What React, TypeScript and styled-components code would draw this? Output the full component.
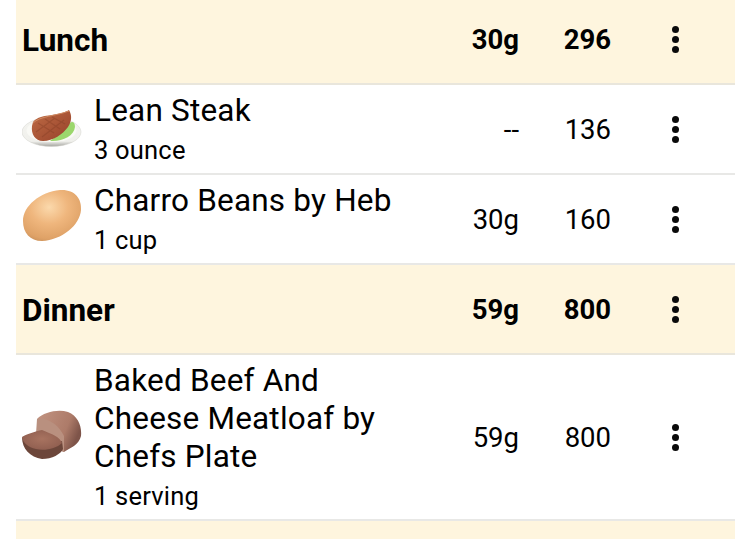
import React from "react";
import styled, { createGlobalStyle } from "styled-components";

const Global = createGlobalStyle`
  html, body { margin: 0; padding: 0; background: #fff; overflow: hidden; }
  body { font-family: Roboto, "Liberation Sans", sans-serif; color: #000; }
`;

const List = styled.div`
  margin: -5px 15px 0 16px;
  display: flex;
  flex-direction: column;
`;

const Row = styled.div<{ $header?: boolean }>`
  display: grid;
  grid-template-columns: 78px 1fr 90px 92px 124px;
  align-items: center;
  min-height: 88px;
  border-bottom: 2px solid ${(p) => (p.$header ? "#e9e6dc" : "#e8e8e6")};
  background: ${(p) => (p.$header ? "#fef5de" : "#fff")};
  font-weight: ${(p) => (p.$header ? 700 : 400)};
`;

const HeaderTitle = styled.div`
  grid-column: 1 / span 2;
  padding: 2px 0 0 6px;
  font-size: 31.5px;
  font-weight: 700;
`;

const IconCell = styled.div`
  padding-left: 6px;
  display: flex;
  align-items: center;
`;

const Info = styled.div`
  padding: 7px 0 8px;
  display: flex;
  flex-direction: column;
`;

const Name = styled.div`
  font-size: 31.5px;
  line-height: 38px;
  letter-spacing: 0.2px;
  width: 300px;
`;

const Amount = styled.div`
  font-size: 25.5px;
  line-height: 30px;
  margin-top: 5px;
  letter-spacing: 0.2px;
`;

const Num = styled.div<{ $col: number }>`
  grid-column: ${(p) => p.$col};
  text-align: right;
  font-size: 27.5px;
`;

const Menu = styled.div`
  grid-column: 5;
  display: flex;
  flex-direction: column;
  align-items: center;
  justify-content: center;
  gap: 3px;
  padding-left: 5px;
`;

const Dot = styled.span`
  width: 7px;
  height: 7px;
  border-radius: 50%;
  background: #0a0a0a;
`;

const Dots = () => (
  <Menu>
    <Dot />
    <Dot />
    <Dot />
  </Menu>
);

const Steak = () => (
  <svg width="60" height="38" viewBox="0 0 60 38">
    <defs>
      <linearGradient id="pl" x1="0" y1="0" x2="0" y2="1">
        <stop offset="0" stopColor="#f4f4f0" />
        <stop offset="0.82" stopColor="#f0f0ec" />
        <stop offset="1" stopColor="#a3a39e" />
      </linearGradient>
      <linearGradient id="st" x1="0" y1="0" x2="1" y2="1">
        <stop offset="0" stopColor="#bf6c45" />
        <stop offset="1" stopColor="#96412a" />
      </linearGradient>
    </defs>
    <ellipse cx="29.5" cy="22" rx="29.5" ry="14.5" fill="url(#pl)" stroke="#d2d2cc" strokeWidth="0.5" />
    <ellipse cx="29.5" cy="20.5" rx="25" ry="11.5" fill="#f9f9f5" />
    <path d="M28 31 C40 32 52 26 53 17 C53 11 49 10 45 16 C40 24 33 27 28 31Z" fill="#9bd76c" />
    <path d="M11 12 C15 7 22 6 30 5 C37 4 44 2 47 0 C50 5 50 11 46 17 C41 24 31 31 21 31 C13 31 9 24 10 16Z" fill="url(#st)" />
    <path d="M16 13 L32 23 M23 9 L38 19 M30 7 L43 14 M14 22 L33 8 M20 27 L42 10" stroke="#7f3a22" strokeWidth="1.2" opacity="0.35" />
    <path d="M11 13 C18 6 34 6 47 1" fill="none" stroke="#cf8a62" strokeWidth="1" />
  </svg>
);

const Bean = () => (
  <svg width="60" height="60" viewBox="0 0 60 60">
    <defs>
      <radialGradient id="be" cx="0.45" cy="0.34" r="0.72">
        <stop offset="0" stopColor="#fbd9ac" />
        <stop offset="0.45" stopColor="#efb67d" />
        <stop offset="0.85" stopColor="#dfa267" />
        <stop offset="1" stopColor="#c9905a" />
      </radialGradient>
    </defs>
    <path d="M1 32 C1 17 18 3 38 1 C52 0 60 9 59 21 C58 36 40 51 20 52 C8 52 1 44 1 32Z" fill="url(#be)" />
  </svg>
);

const Meatloaf = () => (
  <svg width="60" height="54" viewBox="0 0 60 54">
    <defs>
      <linearGradient id="lf" x1="0" y1="0" x2="1" y2="0.4">
        <stop offset="0" stopColor="#c29482" />
        <stop offset="0.72" stopColor="#ad7b69" />
        <stop offset="1" stopColor="#7e5449" />
      </linearGradient>
      <radialGradient id="sl" cx="0.5" cy="0.45" r="0.65">
        <stop offset="0" stopColor="#a87360" />
        <stop offset="1" stopColor="#8d5c4e" />
      </radialGradient>
    </defs>
    <path d="M15 9 C22 2 36 -1 46 2 C56 6 60 16 59 26 C57 35 48 38 42 42 L36 40 L15 26Z" fill="url(#lf)" />
    <path d="M15 9 C26 7 37 15 42 26 L42 42 C34 34 22 30 14 24Z" fill="#b9907f" />
    <path d="M0 27 C0 39 8 47 20 49 C30 49 39 44 41 39 L40 31 C30 36 8 36 0 27Z" fill="#6c463a" />
    <path d="M0 27 C2 25 14 21 20 20 C30 24 38 27 40 33 C34 39 22 41 14 39 C6 37 1 33 0 27Z" fill="url(#sl)" />
  </svg>
);

type Item = { icon: React.ReactNode; name: string; amount: string; carbs: string; cals: string };

const FoodRow = ({ icon, name, amount, carbs, cals }: Item) => (
  <Row>
    <IconCell>{icon}</IconCell>
    <Info>
      <Name>{name}</Name>
      <Amount>{amount}</Amount>
    </Info>
    <Num $col={3}>{carbs}</Num>
    <Num $col={4}>{cals}</Num>
    <Dots />
  </Row>
);

const MealRow = ({ title, carbs, cals }: { title: string; carbs: string; cals: string }) => (
  <Row $header>
    <HeaderTitle>{title}</HeaderTitle>
    <Num $col={3}>{carbs}</Num>
    <Num $col={4}>{cals}</Num>
    <Dots />
  </Row>
);

export default function App() {
  return (
    <>
      <Global />
      <List>
        <MealRow title="Lunch" carbs="30g" cals="296" />
        <FoodRow icon={<Steak />} name="Lean Steak" amount="3 ounce" carbs="--" cals="136" />
        <FoodRow icon={<Bean />} name="Charro Beans by Heb" amount="1 cup" carbs="30g" cals="160" />
        <MealRow title="Dinner" carbs="59g" cals="800" />
        <FoodRow
          icon={<Meatloaf />}
          name="Baked Beef And Cheese Meatloaf by Chefs Plate"
          amount="1 serving"
          carbs="59g"
          cals="800"
        />
        <MealRow title="" carbs="" cals="" />
      </List>
    </>
  );
}
